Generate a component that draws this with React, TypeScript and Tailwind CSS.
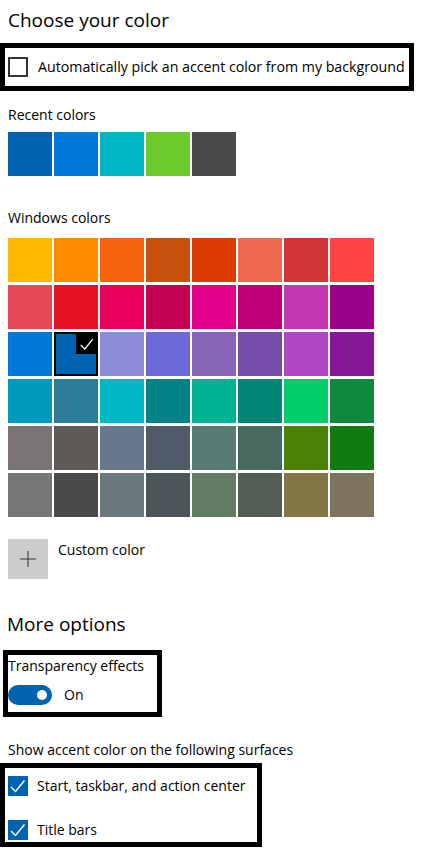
import React from 'react';

const recent = ['#0063b1', '#0078d7', '#00b7c3', '#6bcb2a', '#4c4a48'];

const windowsColors = [
  ['#ffb900', '#ff8c00', '#f7630c', '#ca5010', '#da3b01', '#ef6950', '#d13438', '#ff4343'],
  ['#e74856', '#e81123', '#ea005e', '#c30052', '#e3008c', '#bf0077', '#c239b3', '#9a0089'],
  ['#0078d7', '#0063b1', '#8e8cd8', '#6b69d6', '#8764b8', '#744da9', '#b146c2', '#881798'],
  ['#0099bc', '#2d7d9a', '#00b7c3', '#038387', '#00b294', '#018574', '#00cc6a', '#10893e'],
  ['#7a7574', '#5d5a58', '#68768a', '#515c6b', '#567c73', '#486860', '#498205', '#107c10'],
  ['#767676', '#4c4a48', '#69797e', '#4a5459', '#647c64', '#525e54', '#847545', '#7e735f'],
];

const Check = ({ className }: { className?: string }) => (
  <svg viewBox="0 0 20 20" className={className} fill="none" stroke="white" strokeWidth="1.4">
    <path d="M3 11 L7.5 15.5 L16.5 4.5" />
  </svg>
);

const Swatch = ({ color, selected }: { color: string; selected?: boolean }) => {
  if (selected) {
    return (
      <div className="relative w-[44px] h-[44px] border-2 border-black" style={{ backgroundColor: color }}>
        <div className="absolute -top-[2px] -right-[2px] w-[22px] h-[22px] bg-black">
          <Check className="w-[18px] h-[18px] mt-[3px] ml-[2px]" />
        </div>
      </div>
    );
  }
  return <div className="w-[44px] h-[44px]" style={{ backgroundColor: color }} />;
};

const BlueCheckbox = ({ label }: { label: string }) => (
  <div className="flex items-center gap-[9px]">
    <div className="w-[20px] h-[20px] bg-[#0063b1]">
      <Check className="w-[20px] h-[20px]" />
    </div>
    <span className="text-[14px] leading-[20px] whitespace-nowrap">{label}</span>
  </div>
);

export default function App() {
  return (
    <div
      className="w-[421px] h-[852px] bg-white text-black overflow-hidden"
      style={{ fontFamily: '"Open Sans", "Noto Sans", sans-serif' }}
    >
      <h1 className="pl-[8px] pt-[6px] text-[19px] leading-[28px] font-normal">Choose your color</h1>

      <div className="mt-[9px] w-[414px] h-[48px] border-[5px] border-black flex items-center pl-[3px] gap-[10px]">
        <div className="w-[20px] h-[20px] border-2 border-[#333333]" />
        <span className="text-[14.2px] leading-[20px] whitespace-nowrap">
          Automatically pick an accent color from my background
        </span>
      </div>

      <div className="pl-[8px]">
        <p className="mt-[14px] text-[14px] leading-[20px]">Recent colors</p>
        <div className="mt-[7px] flex gap-[2px]">
          {recent.map((c, i) => (
            <Swatch key={i} color={c} />
          ))}
        </div>

        <p className="mt-[32px] text-[14px] leading-[20px]">Windows colors</p>
        <div className="mt-[10px] grid grid-cols-[repeat(8,44px)] gap-x-[2px] gap-y-[3px]">
          {windowsColors.map((row, r) =>
            row.map((c, i) => <Swatch key={`${r}-${i}`} color={c} selected={r === 2 && i === 1} />)
          )}
        </div>

        <div className="mt-[22px] flex items-start gap-[10px]">
          <div className="w-[40px] h-[40px] bg-[#cccccc] flex items-center justify-center">
            <svg viewBox="0 0 16 16" className="w-[16px] h-[16px]" fill="none" stroke="#333333" strokeWidth="1">
              <path d="M8 0 V16 M0 8 H16" />
            </svg>
          </div>
          <span className="mt-[1px] text-[14px] leading-[20px]">Custom color</span>
        </div>
      </div>

      <h2 className="mt-[31px] pl-[7px] text-[19px] leading-[28px] font-normal">More options</h2>

      <div className="mt-[12px] ml-[3px] w-[159px] h-[67px] border-[5px] border-black pt-[1px]">
        <p className="text-[14px] leading-[20px] whitespace-nowrap">Transparency effects</p>
        <div className="mt-[9px] flex items-center gap-[12px]">
          <div className="w-[44px] h-[20px] rounded-full bg-[#0063b1] flex items-center justify-end pr-[5px]">
            <div className="w-[10px] h-[10px] rounded-full bg-white" />
          </div>
          <span className="text-[14px] leading-[20px]">On</span>
        </div>
      </div>

      <p className="mt-[23px] pl-[8px] text-[14px] leading-[20px] whitespace-nowrap">
        Show accent color on the following surfaces
      </p>

      <div className="mt-[3px] w-[262px] h-[84px] border-[5px] border-black pl-[3px] pt-[8px] flex flex-col gap-[24px]">
        <BlueCheckbox label="Start, taskbar, and action center" />
        <BlueCheckbox label="Title bars" />
      </div>
    </div>
  );
}
